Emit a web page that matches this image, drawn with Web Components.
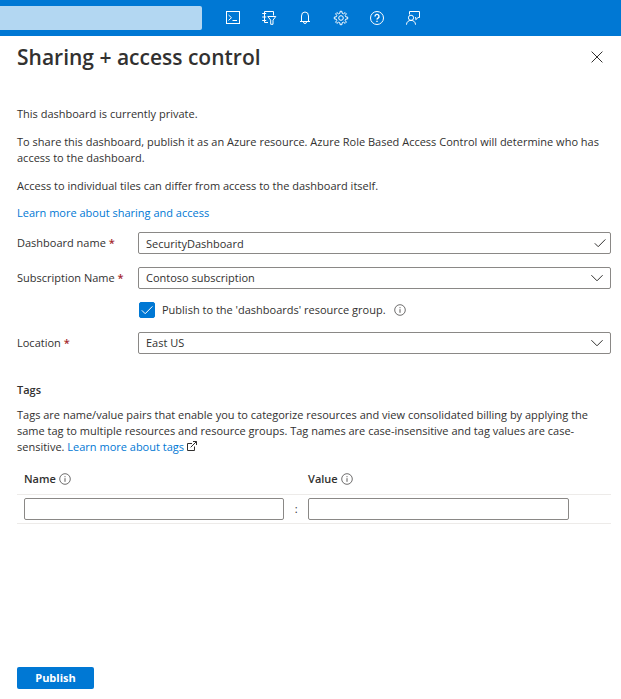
<!DOCTYPE html>
<html lang="en">
<head>
<meta charset="utf-8">
<title>Sharing + access control</title>
<style>
  body {
    margin: 0;
    background: #fff;
    color: #323130;
    font: 11px/16px "Open Sans", "Noto Sans", sans-serif;
    --blue: #0078d4;
    --line: #8a8886;
    --required: #a4262c;
  }
</style>
</head>
<body>
<portal-app></portal-app>
<script>
const define = (name, html, setup) => customElements.define(name, class extends HTMLElement {
  connectedCallback() {
    if (this.shadowRoot) return;
    const root = this.attachShadow({ mode: "open" });
    root.innerHTML = html;
    if (setup) setup(this, root);
  }
});

const icons = {
  shell: `<svg viewBox="0 0 16 16"><rect x="1.5" y="1.5" width="13" height="12"/><path d="M3.5 5 6.5 7.7 3.5 10.4M7.5 10.5h4.5"/></svg>`,
  filter: `<svg viewBox="0 0 16 16"><path d="M12.5 5.5v-4h-9v11H7M1.2 3.5h4M1.2 7h4M1.2 10.5h4"/><path d="M6.8 6.5h8l-2.8 3.6v4.2h-2.3v-4.2z"/></svg>`,
  bell: `<svg viewBox="0 0 16 16"><path d="M4.5 11.5V6a3.5 4 0 0 1 7 0v5.5M3 11.5h10M6.5 12a1.5 1.5 0 0 0 3 0"/></svg>`,
  gear: `<svg viewBox="0 0 16 16"><circle cx="8" cy="8" r="2.3"/><path d="m6.9 3.2.2-1.9h1.8l.2 1.9 1.5.6 1.5-1.2 1.3 1.3-1.2 1.5.6 1.5 1.9.2v1.8l-1.9.2-.6 1.5 1.2 1.5-1.3 1.3-1.5-1.2-1.5.6-.2 1.9H7.1l-.2-1.9-1.5-.6-1.5 1.2-1.3-1.3 1.2-1.5-.6-1.5-1.9-.2V7.1l1.9-.2.6-1.5-1.2-1.5 1.3-1.3 1.5 1.2z"/></svg>`,
  help: `<svg viewBox="0 0 16 16"><circle cx="8" cy="8" r="6.5"/><path stroke-width="1.4" d="M6 6.4a2 2 0 1 1 3 1.7c-.7.4-1 .7-1 1.5M8 10.7v1.4"/></svg>`,
  feedback: `<svg viewBox="0 0 16 16"><circle cx="6" cy="7.8" r="2.6"/><path d="M1.5 14.7c0-2.8 2-4.3 4.5-4.3s4.5 1.5 4.5 4.3M4.5 4.5v-3h10v6h-1.4l-2.3 2.2V7.5H10"/></svg>`,
  close: `<svg viewBox="0 0 12 12"><path d="m.6.6 10.8 10.8M11.4.6.6 11.4"/></svg>`,
  check: `<svg viewBox="0 0 12 12"><path d="m.8 6.3 3.4 3.4L11.4 2.4"/></svg>`,
  chevron: `<svg viewBox="0 0 12 12"><path d="m.4 3.2 5.6 5.6 5.6-5.6"/></svg>`,
  info: `<svg viewBox="0 0 12 12"><circle cx="6" cy="6" r="5.3" stroke-width=".7"/><path d="M6 5.2v3.6M6 3.2v1" stroke-width=".8"/></svg>`,
  external: `<svg viewBox="0 0 12 12"><path d="M6 3.5H1.5v7h7V6.5M7 1.5h3.5V5M10.5 1.5 4.7 7.3"/></svg>`
};

define("portal-icon", `<style>
  :host { display: inline-flex; flex: none; width: 12px; height: 12px; pointer-events: none; }
  span { display: flex; flex: 1; }
  svg { width: 100%; height: 100%; fill: none; stroke: currentColor; stroke-width: 1; }
</style><span></span>`, (el, root) => {
  root.querySelector("span").innerHTML = icons[el.getAttribute("name")];
});

define("portal-topbar", `<style>
  :host { display: flex; align-items: center; height: 36px; background: var(--blue); color: #fff; }
  input { width: 32.5%; height: 24px; box-sizing: border-box; border: 0; border-radius: 0 2px 2px 0; background: #b3d7f2; font: inherit; padding: 0 8px; }
  nav { display: flex; gap: 20px; margin-left: 23px; }
  button { display: flex; border: 0; background: none; padding: 0; color: inherit; }
  portal-icon { width: 16px; height: 16px; }
</style>
<input type="search" aria-label="Search">
<nav aria-label="Portal tools">
  <button aria-label="Cloud Shell"><portal-icon name="shell"></portal-icon></button>
  <button aria-label="Directories and subscriptions"><portal-icon name="filter"></portal-icon></button>
  <button aria-label="Notifications"><portal-icon name="bell"></portal-icon></button>
  <button aria-label="Settings"><portal-icon name="gear"></portal-icon></button>
  <button aria-label="Help"><portal-icon name="help"></portal-icon></button>
  <button aria-label="Feedback"><portal-icon name="feedback"></portal-icon></button>
</nav>`);

define("portal-blade", `<style>
  :host { display: flex; flex-direction: column; flex: 1; padding: 0 10px 10px 17px; }
  header { display: flex; justify-content: space-between; align-items: center; height: 42px; margin-bottom: 28px; }
  h1 { margin: 0; font-size: 21px; line-height: 32px; font-weight: 600; }
  header button { display: flex; border: 0; background: none; padding: 8px; color: inherit; }
  main { flex: 1; }
  footer { display: flex; }
</style>
<header><h1></h1><button aria-label="Close"><portal-icon name="close"></portal-icon></button></header>
<main><slot></slot></main>
<footer><slot name="footer"></slot></footer>`, (el, root) => {
  root.querySelector("h1").textContent = el.getAttribute("heading");
});

define("portal-link", `<style>
  a { color: var(--blue); text-decoration: none; }
  portal-icon { margin-left: 2px; vertical-align: -1px; }
</style><a href="#"><slot></slot></a>`, (el, root) => {
  if (el.hasAttribute("external")) root.querySelector("a").insertAdjacentHTML("afterend", `<portal-icon name="external"></portal-icon>`);
});

const fieldStyle = `<style>
  :host { display: grid; grid-template-columns: 121px 1fr; align-items: center; }
  i { color: var(--required); font-style: normal; font-weight: 600; }
  .box { display: grid; align-items: center; }
  .box > * { grid-area: 1 / 1; }
  input, select { appearance: none; width: 100%; height: 22px; box-sizing: border-box; border: 1px solid var(--line); border-radius: 2px; background: #fff; color: inherit; font: inherit; padding: 0 24px 0 7px; }
  portal-icon { justify-self: end; margin-right: 5px; }
  select + portal-icon { margin-right: 8px; }
</style>`;

define("portal-text-field", `${fieldStyle}
<label for="c"><span></span> <i>*</i></label>
<div class="box"><input id="c" type="text" required><portal-icon name="check"></portal-icon></div>`, (el, root) => {
  root.querySelector("span").textContent = el.getAttribute("label");
  root.querySelector("input").value = el.getAttribute("value");
});

define("portal-select-field", `${fieldStyle}
<label for="c"><span></span> <i>*</i></label>
<div class="box"><select id="c" required><option></option></select><portal-icon name="chevron"></portal-icon></div>`, (el, root) => {
  root.querySelector("span").textContent = el.getAttribute("label");
  root.querySelector("option").textContent = el.getAttribute("value");
});

define("portal-checkbox", `<style>
  :host { display: flex; align-items: center; gap: 8px; padding: 0 0 1px 122px; }
  label { display: flex; align-items: center; gap: 7px; }
  .tick { display: grid; place-items: center; color: #fff; }
  .tick > * { grid-area: 1 / 1; }
  input { appearance: none; box-sizing: border-box; margin: 0; width: 16px; height: 16px; border: 1px solid var(--line); border-radius: 2px; }
  input:checked { background: var(--blue); border-color: var(--blue); }
  input:not(:checked) + portal-icon { visibility: hidden; }
</style>
<label><span class="tick"><input type="checkbox" checked><portal-icon name="check"></portal-icon></span><slot></slot></label>
<portal-icon name="info"></portal-icon>`);

define("portal-tags", `<style>
  :host { display: block; }
  table { width: 100%; table-layout: fixed; border-collapse: collapse; }
  .name { width: 45%; }
  .sep { width: 4%; }
  .value { width: 44%; }
  th { text-align: left; font-weight: 600; padding: 0 0 7px; }
  td { padding: 3px 0; }
  tr { border-bottom: 1px solid #edebe9; }
  tr > :first-child { padding-left: 7px; }
  td:nth-child(2) { text-align: center; }
  th portal-icon { vertical-align: -2px; }
  input { display: block; width: 100%; height: 22px; box-sizing: border-box; border: 1px solid var(--line); border-radius: 2px; padding: 0 7px; font: inherit; color: inherit; }
</style>
<table>
  <colgroup><col class="name"><col class="sep"><col class="value"><col></colgroup>
  <thead><tr><th id="n">Name <portal-icon name="info"></portal-icon></th><th></th><th id="v">Value <portal-icon name="info"></portal-icon></th><th></th></tr></thead>
  <tbody><tr><td><input type="text" aria-labelledby="n"></td><td>:</td><td><input type="text" aria-labelledby="v"></td><td></td></tr></tbody>
</table>`);

define("portal-button", `<style>
  button { min-width: 77px; height: 22px; border: 0; border-radius: 2px; background: var(--blue); color: #fff; font: inherit; font-weight: 700; padding: 0 16px; }
</style><button type="button"><slot></slot></button>`);

define("portal-app", `<style>
  :host { display: flex; flex-direction: column; min-height: 100vh; }
  p, h2 { margin: 0 0 12px; font-size: 11px; font-weight: 400; }
  h2 { font-weight: 600; margin-bottom: 9px; }
  .learn { margin: -1px 0 11px; }
  .form { display: grid; gap: 13px; margin-bottom: 28px; }
  .about { margin-bottom: 16px; }
</style>
<portal-topbar></portal-topbar>
<portal-blade heading="Sharing + access control">
  <p>This dashboard is currently private.</p>
  <p>To share this dashboard, publish it as an Azure resource. Azure Role Based Access Control will determine who has access to the dashboard.</p>
  <p>Access to individual tiles can differ from access to the dashboard itself.</p>
  <p class="learn"><portal-link>Learn more about sharing and access</portal-link></p>
  <div class="form">
    <portal-text-field label="Dashboard name" value="SecurityDashboard"></portal-text-field>
    <portal-select-field label="Subscription Name" value="Contoso subscription"></portal-select-field>
    <portal-checkbox>Publish to the 'dashboards' resource group.</portal-checkbox>
    <portal-select-field label="Location" value="East US"></portal-select-field>
  </div>
  <h2>Tags</h2>
  <p class="about">Tags are name/value pairs that enable you to categorize resources and view consolidated billing by applying the same tag to multiple resources and resource groups. Tag names are case-insensitive and tag values are case-sensitive. <portal-link external>Learn more about tags</portal-link></p>
  <portal-tags></portal-tags>
  <portal-button slot="footer">Publish</portal-button>
</portal-blade>`);
</script>
</body>
</html>
